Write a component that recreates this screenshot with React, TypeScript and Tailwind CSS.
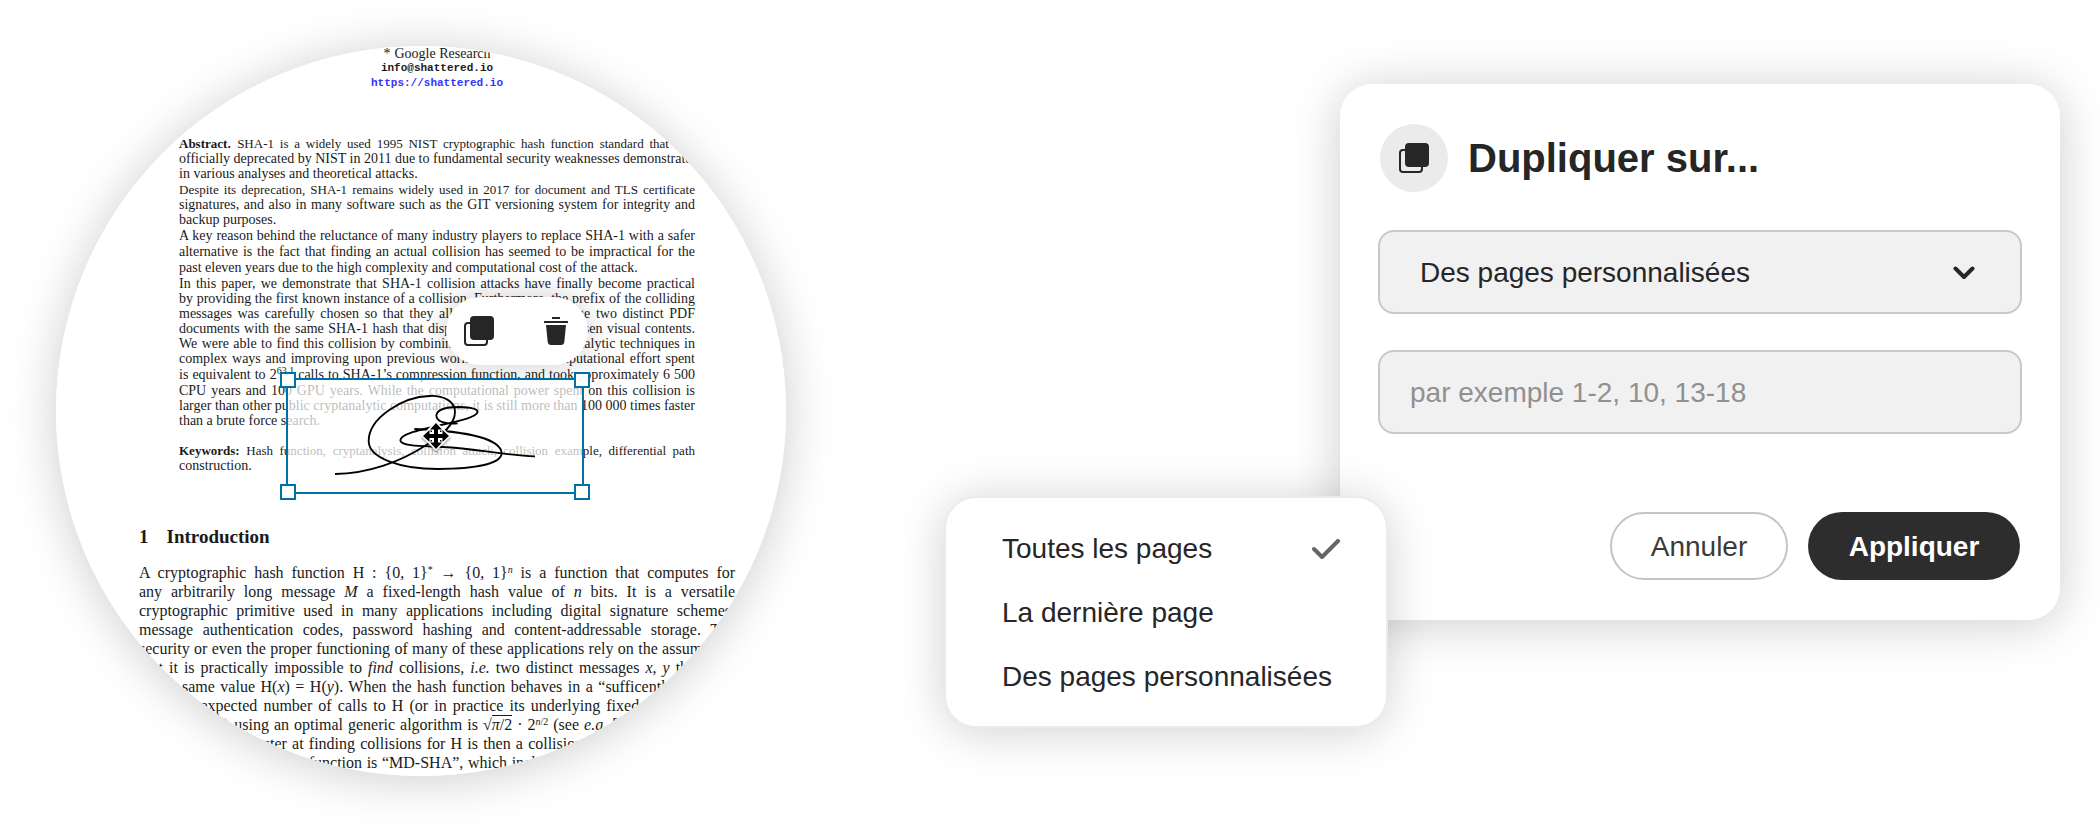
import { useState } from 'react'
import clsx from 'clsx'

const scopes = ['Toutes les pages', 'La dernière page', 'Des pages personnalisées']

type TextLine = {
  text: React.ReactNode
  tall?: boolean
  tight?: boolean
}

const abstractParagraphs: TextLine[][] = [
  [
    {
      text: <><b>Abstract.</b>&ensp;SHA-1 is a widely used 1995 NIST cryptographic hash function standard that was</>,
      tight: true,
    },
    { text: 'officially deprecated by NIST in 2011 due to fundamental security weaknesses demonstrated' },
    { text: 'in various analyses and theoretical attacks.' },
  ],
  [
    { text: 'Despite its deprecation, SHA-1 remains widely used in 2017 for document and TLS certificate', tight: true },
    { text: 'signatures, and also in many software such as the GIT versioning system for integrity and' },
    { text: 'backup purposes.' },
  ],
  [
    { text: 'A key reason behind the reluctance of many industry players to replace SHA-1 with a safer' },
    { text: 'alternative is the fact that finding an actual collision has seemed to be impractical for the', tall: true },
    { text: 'past eleven years due to the high complexity and computational cost of the attack.' },
  ],
  [
    { text: 'In this paper, we demonstrate that SHA-1 collision attacks have finally become practical' },
    { text: 'by providing the first known instance of a collision. Furthermore, the prefix of the colliding' },
    { text: 'messages was carefully chosen so that they allow an attacker to forge two distinct PDF' },
    { text: 'documents with the same SHA-1 hash that display their arbitrarily-chosen visual contents.' },
    { text: 'We were able to find this collision by combining many special cryptanalytic techniques in' },
    { text: 'complex ways and improving upon previous work. In total the computational effort spent' },
    {
      text: <>is equivalent to 2<Sup>63.1</Sup> calls to SHA-1’s compression function, and took approximately 6 500</>,
      tall: true,
    },
    { text: 'CPU years and 100 GPU years. While the computational power spent on this collision is' },
    { text: 'larger than other public cryptanalytic computations, it is still more than 100 000 times faster' },
    { text: 'than a brute force search.' },
  ],
]

const introLines = [
  <>A cryptographic hash function H : {'{0, 1}'}<Sup>*</Sup> → {'{0, 1}'}<Sup><i>n</i></Sup> is a function that computes for</>,
  <>any arbitrarily long message <i>M</i> a fixed-length hash value of <i>n</i> bits. It is a versatile</>,
  'cryptographic primitive used in many applications including digital signature schemes,',
  'message authentication codes, password hashing and content-addressable storage. The',
  'security or even the proper functioning of many of these applications rely on the assumption',
  <>that it is practically impossible to <i>find</i> collisions, <i>i.e.</i> two distinct messages <i>x</i>, <i>y</i> that hash</>,
  <>to the same value H(<i>x</i>) = H(<i>y</i>). When the hash function behaves in a “sufficently random”</>,
  'way, the expected number of calls to H (or in practice its underlying fixed-size compres-',
  <>sion function) using an optimal generic algorithm is √<span className="border-t border-[#1a1a1a]"><i>π</i>/2</span> · 2<Sup><i>n</i>/2</Sup> (see <i>e.g.</i> [29, Appendix A]).</>,
  'algorithm that is faster at finding collisions for H is then a collision attack on the function.',
  'The major family of hash function is “MD-SHA”, which includes MD5, SHA-1 and SHA-2',
]

function Sup({ children }: { children: React.ReactNode }) {
  return <sup className="text-[10px] leading-none">{children}</sup>
}

function DuplicateIcon() {
  return (
    <svg width="30" height="30" viewBox="0 0 30 30" aria-hidden="true">
      <rect x="1" y="7" width="22" height="22" rx="3" fill="none" stroke="#262626" strokeWidth="2" />
      <rect x="6" y="0" width="24" height="24" rx="4" fill="#262626" />
    </svg>
  )
}

function TrashIcon() {
  return (
    <svg width="24" height="28" viewBox="0 0 24 28" fill="#262626" aria-hidden="true">
      <rect x="8" y="0" width="8" height="2" />
      <rect x="0" y="4" width="24" height="2" />
      <path d="M2 8h20l-1.7 17c-.2 1.800-1.500 3-3.300 3H7c-1.800 0-3.100-1.200-3.300-3z" />
    </svg>
  )
}

function Signature() {
  return (
    <svg className="absolute left-[38px] top-[6px]" width="220" height="100" viewBox="0 0 660 300" aria-label="Signature">
      <g fill="none" stroke="#000" strokeWidth="5.500">
        <path d="M27 264C130 263 225 225 290 184C350 148 387 115 387 78C387 45 352 28 310 30C232 32 128 95 128 165C128 216 222 249 335 249C450 248 527 233 527 201C524 163 440 136 265 129" />
        <path d="M395 112C360 115 331 108 331 88C334 70 362 63 398 63C436 64 455 68 455 78C450 93 410 103 345 117C270 134 223 145 223 163C225 182 300 180 350 183C450 188 530 207 627 211" />
      </g>
    </svg>
  )
}

function MoveCursor() {
  return (
    <svg className="absolute left-[132px] top-[40px] drop-shadow-[0_2px_1px_rgba(0,0,0,0.35)]" width="32" height="32" viewBox="0 0 32 32" aria-hidden="true">
      <path d="M16 1L31 16 16 31 1 16z" fill="#fff" />
      <path d="M16 3l6 6.500h-4V14h4.500v-4L29 16l-6.500 6v-4H18v4.500h4L16 29l-6-6.500h4V18H9.500v4L3 16l6.500-6v4H14V9.500h-4z" />
      <path d="M10.500 10.500h1.500v1.500h-1.500zM20 10.500h1.500v1.500h-1.500zM10.500 20h1.500v1.500h-1.500zM20 20h1.500v1.500h-1.500z" />
    </svg>
  )
}

function Line({ children, last, tall, tight }: { children: React.ReactNode; last?: boolean; tall?: boolean; tight?: boolean }) {
  return (
    <span
      className={clsx(
        'block whitespace-nowrap',
        !last && 'text-justify [text-align-last:justify]',
        tall && 'leading-[17px]',
        tight && 'text-[13px]'
      )}
    >
      {children}
    </span>
  )
}

function Selection() {
  return (
    <div className="absolute left-[230px] top-[332px] h-[116px] w-[298px] border-2 border-[#0070a8] bg-white/70">
      <Signature />
      <MoveCursor />
      <span className="absolute -left-2 -top-2 size-4 border-2 border-[#0070a8] bg-white" />
      <span className="absolute -right-2 -top-2 size-4 border-2 border-[#0070a8] bg-white" />
      <span className="absolute -bottom-2 -left-2 size-4 border-2 border-[#0070a8] bg-white" />
      <span className="absolute -bottom-2 -right-2 size-4 border-2 border-[#0070a8] bg-white" />
    </div>
  )
}

function DocumentPreview() {
  return (
    <section className="relative size-[730px] shrink-0 overflow-hidden rounded-full bg-white font-['Liberation_Serif',serif] text-[#1a1a1a]">
      <header className="flex flex-col items-center pl-8 text-sm leading-[15px]">
        <span className="flex gap-1"><span>*</span>Google Research</span>
        <span className="font-['Liberation_Mono',monospace] text-[11px] font-bold leading-[15px]">info@shattered.io</span>
        <a href="https://shattered.io" className="font-['Liberation_Mono',monospace] text-[11px] font-bold leading-[15px] text-[#3333ff]">
          https://shattered.io
        </a>
      </header>

      <div className="mx-[123px] mt-[45px] w-[516px] text-sm leading-[15px]">
        <div className="space-y-px">
          {abstractParagraphs.map((lines, p) => (
            <p key={p}>
              {lines.map(({ text, tall, tight }, i) => (
                <Line key={i} last={i === lines.length - 1} tall={tall} tight={tight}>{text}</Line>
              ))}
            </p>
          ))}
        </div>
        <p className="mt-[15px]">
          <Line tight><b>Keywords:</b> Hash function, cryptanalysis, collision attack, collision example, differential path</Line>
          <Line last>construction.</Line>
        </p>
      </div>

      <div className="ml-[83px] mt-[54px] w-[596px]">
        <h2 className="flex gap-[18px] text-[19px] font-bold leading-5">
          <span>1</span>Introduction
        </h2>
        <p className="mt-4 text-base leading-[19px]">
          {introLines.map((line, i) => (
            <Line key={i}>{line}</Line>
          ))}
        </p>
      </div>

      <Selection />
      <div className="absolute left-[390px] top-[251px] flex h-[68px] w-[142px] items-center justify-between rounded-full bg-white pl-[18px] pr-5 shadow-[0_0_30px_rgba(0,0,0,0.2)]">
        <button type="button" aria-label="Dupliquer"><DuplicateIcon /></button>
        <button type="button" aria-label="Supprimer"><TrashIcon /></button>
      </div>
    </section>
  )
}

function ScopeMenu() {
  const [checked, setChecked] = useState(scopes[0])

  return (
    <ul className="absolute -left-[394px] top-[414px] w-[440px] rounded-[30px] bg-white py-[18px] shadow-[0_0_0_2px_#ebebeb,0_4px_50px_rgba(0,0,0,0.2)]">
      {scopes.map((scope) => (
        <li key={scope}>
          <button
            type="button"
            onClick={() => setChecked(scope)}
            className="flex h-16 w-full items-center justify-between pl-14 pr-[46px] pt-0.5"
          >
            {scope}
            {checked === scope && (
              <svg width="28" height="20" viewBox="0 0 28 20" aria-hidden="true">
                <path d="M2 10l8 8L26 2" fill="none" stroke="#666" strokeWidth="4" strokeLinecap="round" strokeLinejoin="round" />
              </svg>
            )}
          </button>
        </li>
      ))}
    </ul>
  )
}

function DuplicateDialog() {
  return (
    <section className="relative mt-[38px] min-w-0 max-w-[720px] flex-1 rounded-[32px] bg-white p-10 shadow-[0_4px_50px_rgba(0,0,0,0.2)]">
      <h1 className="flex items-center gap-5 text-[40px] font-bold leading-[68px]">
        <span className="flex size-[68px] items-center justify-center rounded-full bg-[#ebebeb]">
          <DuplicateIcon />
        </span>
        Dupliquer sur...
      </h1>

      <form className="-mx-0.5 mt-[38px] flex flex-col gap-9" onSubmit={(e) => e.preventDefault()}>
        <div className="relative">
          <select
            aria-label="Pages"
            defaultValue={scopes[2]}
            className="h-[84px] w-full appearance-none rounded-2xl border-2 border-[#c8c8c8] bg-[#f1f1f1] px-10 pt-0.5 outline-none"
          >
            {scopes.map((scope) => (
              <option key={scope}>{scope}</option>
            ))}
          </select>
          <svg className="pointer-events-none absolute right-[47px] top-9" width="22" height="14" viewBox="0 0 22 14" aria-hidden="true">
            <path d="M2.500 2.500L11 11l8.500-8.500" fill="none" stroke="#262626" strokeWidth="4" strokeLinecap="round" strokeLinejoin="round" />
          </svg>
        </div>
        <input
          type="text"
          aria-label="Numéros de pages"
          placeholder="par exemple 1-2, 10, 13-18"
          className="h-[84px] w-full rounded-2xl border-2 border-[#c8c8c8] bg-[#f1f1f1] px-[30px] pt-0.5 outline-none placeholder:text-[#909090]"
        />
      </form>

      <div className="mt-[78px] flex justify-end gap-5">
        <button type="button" className="h-[68px] min-w-[178px] rounded-full border-2 border-[#c4c4c4] px-9 pt-0.5 text-[#3a3a3a]">
          Annuler
        </button>
        <button type="button" className="h-[68px] min-w-[212px] rounded-full bg-[#2d2d2d] px-9 pt-0.5 font-bold text-white">
          Appliquer
        </button>
      </div>

      <ScopeMenu />
    </section>
  )
}

export default function App() {
  return (
    <main className="flex min-h-screen items-start justify-between gap-[500px] overflow-hidden bg-white pb-[60px] pl-14 pr-10 pt-[46px] font-['Liberation_Sans',Arial,sans-serif] text-[28px] leading-8 text-[#262626]">
      <div className="rounded-full shadow-[0_4px_50px_rgba(0,0,0,0.2)]">
        <DocumentPreview />
      </div>
      <DuplicateDialog />
    </main>
  )
}
